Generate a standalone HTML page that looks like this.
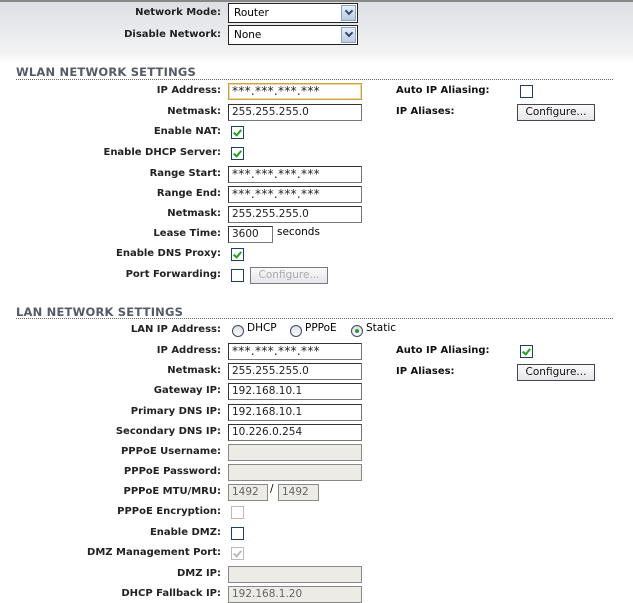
<!DOCTYPE html>
<html><head><style>
body{margin:0;width:633px;height:599px;overflow:hidden;position:relative;background:#fff;font-family:"DejaVu Sans","Liberation Sans",sans-serif;font-size:10.5px;color:#000}
.w{position:absolute;left:0;top:1px;width:633px;height:599px}
.top{position:absolute;left:0;top:0;width:633px;height:62px;background:linear-gradient(#dcdfe3,#f3f3f4 85%,#fff);border-top:2px solid #888;box-sizing:border-box}
.l{position:absolute;right:412px;font-weight:bold;font-size:10px;color:#222;white-space:nowrap;line-height:14px}
.r{position:absolute;left:396px;font-weight:bold;font-size:10px;color:#111;line-height:14px}
.h{position:absolute;left:16px;font-weight:bold;font-size:11.5px;color:#555b66;letter-spacing:0.2px}
.d{position:absolute;left:16px;width:597px;border-top:1px dotted #666}
.i{position:absolute;left:228px;width:134px;height:17px;box-sizing:border-box;border:1px solid #333;border-right-color:#777;border-bottom-color:#777;background:#fff;padding-left:3px;line-height:15px;font-size:10.5px;color:#222}
.st{font-size:12px;letter-spacing:0.3px}
.g{background:#ecebe6;border-color:#888;color:#666}
.c{position:absolute;width:13px;height:13px;box-sizing:border-box;border:1px solid #1c3f6e;background:#fff}
.c.k::after{content:"";position:absolute;left:3px;top:1px;width:3px;height:6px;border:solid #21a121;border-width:0 2px 2px 0;transform:rotate(40deg)}
.c.dis{border-color:#bbb}
.c.dis.k::after{border-color:#bbb}
.b{position:absolute;height:17px;box-sizing:border-box;border:1px solid #445;background:linear-gradient(#fafafa,#e6e6ea);font-size:10.5px;line-height:15px;text-align:center;color:#111}
.s{position:absolute;left:228px;width:130px;height:20px;box-sizing:border-box;border:1px solid #222;background:#fff;padding-left:5px;line-height:18px}
.s::after{content:"";position:absolute;right:1px;top:1px;width:15px;height:16px;background:linear-gradient(#e6eef8,#b9cbe4);border:1px solid #8aa3c8;box-sizing:border-box}
.s span.ar{position:absolute;right:5px;top:4px;width:4px;height:4px;border:solid #34496e;border-width:0 2px 2px 0;transform:rotate(45deg);z-index:2}
.rad{position:absolute;width:12px;height:12px;border-radius:50%;border:1px solid #34496e;background:linear-gradient(#ddd,#fff);box-sizing:border-box}
.rad.on::after{content:"";position:absolute;left:3px;top:3px;width:4px;height:4px;border-radius:50%;background:#2a9a2a}
.t{position:absolute;line-height:14px}
</style></head><body>
<div class="top"></div>
<div class="w">
<div class="l" style="top:5px">Network Mode:</div>
<div class="s" style="top:2px">Router<span class="ar"></span></div>
<div class="l" style="top:27px">Disable Network:</div>
<div class="s" style="top:24px">None<span class="ar"></span></div>

<div class="h" style="top:64px">WLAN NETWORK SETTINGS</div>
<div class="d" style="top:78px"></div>
<div class="l" style="top:83px">IP Address:</div>
<div class="i st" style="top:82px;border:1px solid #c8a040;box-shadow:0 0 0 1px #f0d8a0 inset">***.***.***.***</div>
<div class="r" style="top:83px">Auto IP Aliasing:</div>
<div class="c" style="left:520px;top:84px"></div>
<div class="l" style="top:104px">Netmask:</div>
<div class="i" style="top:103px">255.255.255.0</div>
<div class="r" style="top:104px">IP Aliases:</div>
<div class="b" style="left:517px;top:103px;width:78px">Configure...</div>
<div class="l" style="top:124px">Enable NAT:</div>
<div class="c k" style="left:231px;top:125px"></div>
<div class="l" style="top:145px">Enable DHCP Server:</div>
<div class="c k" style="left:231px;top:146px"></div>
<div class="l" style="top:166px">Range Start:</div>
<div class="i st" style="top:165px">***.***.***.***</div>
<div class="l" style="top:186px">Range End:</div>
<div class="i st" style="top:185px">***.***.***.***</div>
<div class="l" style="top:206px">Netmask:</div>
<div class="i" style="top:205px">255.255.255.0</div>
<div class="l" style="top:226px">Lease Time:</div>
<div class="i" style="top:225px;width:45px">3600</div>
<div class="t" style="left:277px;top:224px">seconds</div>
<div class="l" style="top:246px">Enable DNS Proxy:</div>
<div class="c k" style="left:231px;top:247px"></div>
<div class="l" style="top:267px">Port Forwarding:</div>
<div class="c" style="left:231px;top:268px"></div>
<div class="b" style="left:250px;top:266px;width:78px;color:#aaa;border-color:#778">Configure...</div>

<div class="h" style="top:304px">LAN NETWORK SETTINGS</div>
<div class="d" style="top:317px"></div>
<div class="l" style="top:322px">LAN IP Address:</div>
<div class="rad" style="left:232px;top:324px"></div><div class="t" style="left:247px;top:320px">DHCP</div>
<div class="rad" style="left:290px;top:324px"></div><div class="t" style="left:305px;top:320px">PPPoE</div>
<div class="rad on" style="left:351px;top:324px"></div><div class="t" style="left:366px;top:320px">Static</div>
<div class="l" style="top:343px">IP Address:</div>
<div class="i st" style="top:342px">***.***.***.***</div>
<div class="r" style="top:343px">Auto IP Aliasing:</div>
<div class="c k" style="left:520px;top:344px"></div>
<div class="l" style="top:363px">Netmask:</div>
<div class="i" style="top:362px">255.255.255.0</div>
<div class="r" style="top:364px">IP Aliases:</div>
<div class="b" style="left:517px;top:363px;width:78px">Configure...</div>
<div class="l" style="top:383px">Gateway IP:</div>
<div class="i" style="top:382px">192.168.10.1</div>
<div class="l" style="top:404px">Primary DNS IP:</div>
<div class="i" style="top:403px">192.168.10.1</div>
<div class="l" style="top:424px">Secondary DNS IP:</div>
<div class="i" style="top:423px">10.226.0.254</div>
<div class="l" style="top:444px">PPPoE Username:</div>
<div class="i g" style="top:443px"></div>
<div class="l" style="top:464px">PPPoE Password:</div>
<div class="i g" style="top:463px"></div>
<div class="l" style="top:484px">PPPoE MTU/MRU:</div>
<div class="i g" style="top:483px;width:40px">1492</div>
<div class="t" style="left:270px;top:481px">/</div>
<div class="i g" style="top:483px;left:278px;width:41px">1492</div>
<div class="l" style="top:504px">PPPoE Encryption:</div>
<div class="c dis" style="left:231px;top:505px"></div>
<div class="l" style="top:525px">Enable DMZ:</div>
<div class="c" style="left:231px;top:526px"></div>
<div class="l" style="top:545px">DMZ Management Port:</div>
<div class="c dis k" style="left:231px;top:546px"></div>
<div class="l" style="top:566px">DMZ IP:</div>
<div class="i g" style="top:565px"></div>
<div class="l" style="top:586px">DHCP Fallback IP:</div>
<div class="i g" style="top:585px">192.168.1.20</div>
</div>
</body></html>
